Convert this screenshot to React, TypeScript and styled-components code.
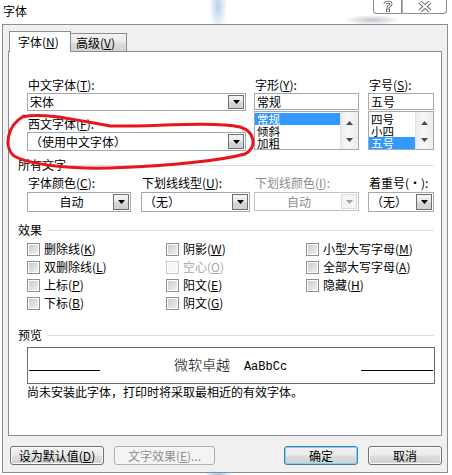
import React from 'react'
import styled, { createGlobalStyle, css } from 'styled-components'

const GlobalStyle = createGlobalStyle`
  html, body {
    margin: 0;
    padding: 0;
    background: #fff;
  }
  body {
    font-family: 'Noto Sans CJK SC', 'Liberation Sans', sans-serif;
    font-size: 12px;
    line-height: 14px;
    color: #000;
  }
`

const Window = styled.div`
  position: relative;
  width: 452px;
  height: 475px;
  overflow: hidden;
  background:
    radial-gradient(ellipse 9px 26px at 218px 6px, rgba(120, 170, 220, 0.55), transparent),
    radial-gradient(ellipse 28px 5px at 372px 20px, rgba(70, 90, 110, 0.35), transparent),
    radial-gradient(ellipse 14px 4px at 218px 474px, rgba(90, 150, 210, 0.6), transparent),
    #fff;
`

const TitleBar = styled.div`
  height: 24px;
  display: flex;
  justify-content: space-between;
  align-items: flex-start;
`

const Title = styled.div`
  padding: 4px 0 0 3px;
`

const CaptionButtons = styled.div`
  display: flex;
  margin-right: 5px;
  margin-top: -1px;
`

const CaptionButton = styled.div<{ $w: number; $side: 'left' | 'right' }>`
  width: ${({ $w }) => $w}px;
  height: 15px;
  box-sizing: border-box;
  border: 1px solid #8e8e8e;
  border-top: none;
  ${({ $side }) =>
    $side === 'left'
      ? css`
          border-radius: 0 0 0 4px;
        `
      : css`
          border-left: 1px solid #b0b0b0;
          border-radius: 0 0 4px 0;
        `}
  display: flex;
  align-items: center;
  justify-content: center;
  background: rgba(255, 255, 255, 0.6);
`

const Body = styled.div`
  margin-left: 2px;
  width: 446px;
  height: 449px;
  box-sizing: border-box;
  border: 1px solid #8d8d8d;
  background: #f0f0f0;
  padding: 6px 0 0 5px;
`

const TabStrip = styled.div`
  position: relative;
  z-index: 1;
  display: flex;
  align-items: flex-end;
  height: 20px;
  padding-left: 1px;
`

const Tab = styled.div<{ $active?: boolean }>`
  box-sizing: border-box;
  border: 1px solid #898c95;
  border-bottom: none;
  ${({ $active }) =>
    $active
      ? css`
          width: 62px;
          height: 21px;
          margin-bottom: -1px;
          background: #fff;
          padding: 3px 0 0 8px;
        `
      : css`
          width: 56px;
          height: 18px;
          border-left: none;
          background: linear-gradient(#f3f3f3, #e9e9e9 50%, #dcdcdc 51%, #d4d4d4);
          padding: 2px 0 0 5px;
        `}
`

const Panel = styled.div`
  width: 434px;
  height: 385px;
  box-sizing: border-box;
  border: 1px solid #898c95;
  background: #fff;
  padding-top: 26px;
`

const Key = styled.span`
  text-decoration: underline;
`

const FontRow = styled.div`
  display: grid;
  grid-template-columns: 227px 114px 67px;
  padding-left: 18px;
`

const Column = styled.div`
  display: flex;
  flex-direction: column;
`

const Label = styled.div<{ $disabled?: boolean; $gap?: number }>`
  height: 14px;
  padding-left: 1px;
  margin-top: ${({ $gap }) => $gap ?? 0}px;
  margin-bottom: 1px;
  white-space: nowrap;
  color: ${({ $disabled }) => ($disabled ? '#8c8c8c' : '#000')};
`

const Field = styled.div<{ $w: number; $h: number; $disabled?: boolean }>`
  width: ${({ $w }) => $w}px;
  height: ${({ $h }) => $h}px;
  box-sizing: border-box;
  border: 1px solid ${({ $disabled }) => ($disabled ? '#bfc3c8' : '#a3a9b1')};
  background: #fff;
  display: flex;
  align-items: stretch;
  padding: 1px;
  color: ${({ $disabled }) => ($disabled ? '#8c8c8c' : '#000')};
`

const FieldText = styled.div<{ $center?: boolean }>`
  flex: 1;
  display: flex;
  align-items: center;
  padding-left: 1px;
  white-space: nowrap;
  justify-content: ${({ $center }) => ($center ? 'center' : 'flex-start')};
`

const DropButton = styled.div<{ $disabled?: boolean }>`
  width: 16px;
  box-sizing: border-box;
  border: 1px solid ${({ $disabled }) => ($disabled ? '#d9dbde' : '#6f6f6f')};
  background: ${({ $disabled }) =>
    $disabled ? '#f4f4f4' : 'linear-gradient(#f6f6f6, #e6e6e6 50%, #d6d6d6 51%, #cfcfcf)'};
  display: flex;
  align-items: center;
  justify-content: center;
`

const ListBox = styled.div<{ $w: number }>`
  width: ${({ $w }) => $w}px;
  height: 39px;
  margin-top: 1px;
  box-sizing: border-box;
  border: 1px solid #a3a9b1;
  display: flex;
`

const ListItems = styled.div`
  flex: 1;
  display: flex;
  flex-direction: column;
  padding-top: 1px;
`

const ListItem = styled.div<{ $selected?: boolean }>`
  height: 12px;
  line-height: 12px;
  font-size: 11.5px;
  padding-left: 2px;
  background: ${({ $selected }) => ($selected ? '#3399ff' : 'transparent')};
  color: ${({ $selected }) => ($selected ? '#fff' : '#000')};
`

const ScrollBar = styled.div`
  width: 17px;
  background: linear-gradient(90deg, #ececec, #f7f7f7 40%, #ececec);
  border-left: 1px solid #e4e4e4;
  display: flex;
  flex-direction: column;
  justify-content: space-between;
  align-items: center;
  padding: 9px 0 7px;
`

const GroupHeader = styled.div<{ $gap: number }>`
  display: flex;
  align-items: center;
  gap: 5px;
  margin: ${({ $gap }) => $gap}px 0 0 9px;
  width: 416px;
  height: 14px;
  &::after {
    content: '';
    flex: 1;
    height: 1px;
    background: #d5dfe5;
  }
`

const AttrRow = styled.div`
  display: grid;
  grid-template-columns: 114px 113px 114px 66px;
  padding-left: 18px;
  margin-top: 4px;
`

const AttrLabel = styled(Label)`
  margin-bottom: 2px;
`

const CheckGrid = styled.div`
  display: grid;
  grid-template-columns: 139px 140px 1fr;
  grid-auto-rows: 18px;
  padding-left: 18px;
  margin-top: 3px;
`

const CheckItem = styled.div<{ $disabled?: boolean }>`
  display: flex;
  align-items: center;
  gap: 4px;
  white-space: nowrap;
  color: ${({ $disabled }) => ($disabled ? '#a8a8a8' : '#000')};
`

const CheckBox = styled.div<{ $disabled?: boolean }>`
  width: 13px;
  height: 13px;
  box-sizing: border-box;
  border: 1px solid ${({ $disabled }) => ($disabled ? '#c9c9c9' : '#8e8f8f')};
  background: ${({ $disabled }) =>
    $disabled ? '#f6f6f6' : 'linear-gradient(135deg, #c8c9cb, #f2f2f2)'};
  box-shadow: inset 0 0 0 1px #fff;
`

const Preview = styled.div`
  margin: 5px 0 0 18px;
  width: 408px;
  height: 37px;
  box-sizing: border-box;
  border: 1px solid #6d6d6d;
  display: flex;
  align-items: center;
  justify-content: space-between;
  padding: 0 1px 0 1px;
`

const PreviewLine = styled.div<{ $w: number }>`
  width: ${({ $w }) => $w}px;
  height: 1px;
  margin-top: 10px;
  background: #000;
`

const PreviewText = styled.div`
  display: flex;
  align-items: baseline;
  gap: 14px;
  font-size: 14px;
  line-height: 16px;
  font-weight: 300;
`

const Latin = styled.span`
  font-family: 'Liberation Mono', 'DejaVu Sans Mono', monospace;
  font-size: 12px;
  font-weight: 400;
`

const Note = styled.div`
  margin: 1px 0 0 18px;
  height: 14px;
`

const ButtonRow = styled.div`
  display: flex;
  justify-content: space-between;
  width: 432px;
  margin: 10px 0 0 2px;
`

const ButtonGroup = styled.div`
  display: flex;
  gap: 10px;
`

const Button = styled.div<{ $w: number; $variant?: 'default' | 'disabled' }>`
  width: ${({ $w }) => $w}px;
  height: 19px;
  box-sizing: border-box;
  border: 1px solid #707070;
  border-radius: 3px;
  background: linear-gradient(#f2f2f2, #ebebeb 48%, #dddddd 52%, #cfcfcf);
  box-shadow: inset 0 0 0 1px #fbfbfb;
  display: flex;
  align-items: center;
  justify-content: center;
  white-space: nowrap;
  ${({ $variant }) =>
    $variant === 'default' &&
    css`
      border-color: #3c7fb1;
      box-shadow: inset 0 0 0 1px #7fd3f7;
    `}
  ${({ $variant }) =>
    $variant === 'disabled' &&
    css`
      border-color: #adb2b5;
      background: #f4f4f4;
      box-shadow: none;
      color: #8f8f8f;
    `}
`

const Annotation = styled.svg`
  position: absolute;
  left: 0;
  top: 0;
  pointer-events: none;
`

const Arrow = ({ up, color = '#000' }: { up?: boolean; color?: string }) => (
  <svg width="7" height="4" viewBox="0 0 7 4">
    <polygon points={up ? '3.5,0 7,4 0,4' : '0,0 7,0 3.5,4'} fill={color} />
  </svg>
)

const Combo = ({
  w,
  h,
  text,
  center,
  disabled,
}: {
  w: number
  h: number
  text: string
  center?: boolean
  disabled?: boolean
}) => (
  <Field $w={w} $h={h} $disabled={disabled}>
    <FieldText $center={center}>{text}</FieldText>
    <DropButton $disabled={disabled}>
      <Arrow color={disabled ? '#a0a0a0' : '#000'} />
    </DropButton>
  </Field>
)

const List = ({ w, items, selected }: { w: number; items: string[]; selected: number }) => (
  <ListBox $w={w}>
    <ListItems>
      {items.map((item, i) => (
        <ListItem key={item} $selected={i === selected}>
          {item}
        </ListItem>
      ))}
    </ListItems>
    <ScrollBar>
      <Arrow up color="#4d4d4d" />
      <Arrow color="#4d4d4d" />
    </ScrollBar>
  </ListBox>
)

const checks: { text: string; key: string; disabled?: boolean }[] = [
  { text: '删除线', key: 'K' },
  { text: '阴影', key: 'W' },
  { text: '小型大写字母', key: 'M' },
  { text: '双删除线', key: 'L' },
  { text: '空心', key: 'O', disabled: true },
  { text: '全部大写字母', key: 'A' },
  { text: '上标', key: 'P' },
  { text: '阳文', key: 'E' },
  { text: '隐藏', key: 'H' },
  { text: '下标', key: 'B' },
  { text: '阴文', key: 'G' },
]

const App = () => (
  <Window>
    <GlobalStyle />
    <TitleBar>
      <Title>字体</Title>
      <CaptionButtons>
        <CaptionButton $w={29} $side="left">
          <svg width="10" height="12" viewBox="0 0 10 12">
            <path
              d="M2 4 C2 1.5 8 1.5 8 4 C8 6 5 6 5 8"
              fill="none"
              stroke="#6a6a6a"
              strokeWidth="3"
            />
            <path
              d="M2 4 C2 1.5 8 1.5 8 4 C8 6 5 6 5 8"
              fill="none"
              stroke="#fff"
              strokeWidth="1.2"
            />
            <rect x="3.5" y="9" width="3" height="3" fill="#fff" stroke="#6a6a6a" strokeWidth="1" />
          </svg>
        </CaptionButton>
        <CaptionButton $w={45} $side="right">
          <svg width="14" height="11" viewBox="0 0 14 11">
            <path d="M2 1 L12 10 M12 1 L2 10" stroke="#6a6a6a" strokeWidth="4" />
            <path d="M2 1 L12 10 M12 1 L2 10" stroke="#fff" strokeWidth="2" />
          </svg>
        </CaptionButton>
      </CaptionButtons>
    </TitleBar>
    <Body>
      <TabStrip>
        <Tab $active>
          字体(<Key>N</Key>)
        </Tab>
        <Tab>
          高级(<Key>V</Key>)
        </Tab>
      </TabStrip>
      <Panel>
        <FontRow>
          <Column>
            <Label>
              中文字体(<Key>T</Key>):
            </Label>
            <Combo w={219} h={18} text="宋体" />
            <Label $gap={6}>
              西文字体(<Key>F</Key>):
            </Label>
            <Combo w={219} h={19} text="（使用中文字体）" />
          </Column>
          <Column>
            <Label>
              字形(<Key>Y</Key>):
            </Label>
            <Field $w={105} $h={17}>
              <FieldText>常规</FieldText>
            </Field>
            <List w={105} items={['常规', '倾斜', '加粗']} selected={0} />
          </Column>
          <Column>
            <Label>
              字号(<Key>S</Key>):
            </Label>
            <Field $w={66} $h={17}>
              <FieldText>五号</FieldText>
            </Field>
            <List w={66} items={['四号', '小四', '五号']} selected={2} />
          </Column>
        </FontRow>

        <GroupHeader $gap={7}>所有文字</GroupHeader>
        <AttrRow>
          <Column>
            <AttrLabel>
              字体颜色(<Key>C</Key>):
            </AttrLabel>
            <Combo w={104} h={20} text="自动" center />
          </Column>
          <Column>
            <AttrLabel>
              下划线线型(<Key>U</Key>):
            </AttrLabel>
            <Combo w={109} h={20} text="（无）" />
          </Column>
          <Column>
            <AttrLabel $disabled>
              下划线颜色(<Key>I</Key>):
            </AttrLabel>
            <Combo w={105} h={19} text="自动" center disabled />
          </Column>
          <Column>
            <AttrLabel>着重号(·):</AttrLabel>
            <Combo w={66} h={20} text="（无）" />
          </Column>
        </AttrRow>

        <GroupHeader $gap={11}>效果</GroupHeader>
        <CheckGrid>
          {checks.map((c) => (
            <CheckItem key={c.key} $disabled={c.disabled}>
              <CheckBox $disabled={c.disabled} />
              <span>
                {c.text}(<Key>{c.key}</Key>)
              </span>
            </CheckItem>
          ))}
        </CheckGrid>

        <GroupHeader $gap={16}>预览</GroupHeader>
        <Preview>
          <PreviewLine $w={71} />
          <PreviewText>
            <span>微软卓越</span>
            <Latin>AaBbCc</Latin>
          </PreviewText>
          <PreviewLine $w={72} />
        </Preview>
        <Note>尚未安装此字体，打印时将采取最相近的有效字体。</Note>
      </Panel>
      <ButtonRow>
        <ButtonGroup>
          <Button $w={94}>
            设为默认值(<Key>D</Key>)
          </Button>
          <Button $w={101} $variant="disabled">
            文字效果(<Key>E</Key>)...
          </Button>
        </ButtonGroup>
        <ButtonGroup>
          <Button $w={74} $variant="default">
            确定
          </Button>
          <Button $w={74}>取消</Button>
        </ButtonGroup>
      </ButtonRow>
    </Body>
    <Annotation width="452" height="475" viewBox="0 0 452 475">
      <path
        d="M22 117 C45 112, 80 121, 110 126 C150 127, 210 121, 240 127 C256 132, 257 148, 245 154 C215 162, 160 166, 110 168 C70 169, 30 165, 14 156 C4 148, 6 126, 24 116"
        fill="none"
        stroke="#e8161c"
        strokeWidth="3"
        strokeLinecap="round"
      />
    </Annotation>
  </Window>
)

export default App
